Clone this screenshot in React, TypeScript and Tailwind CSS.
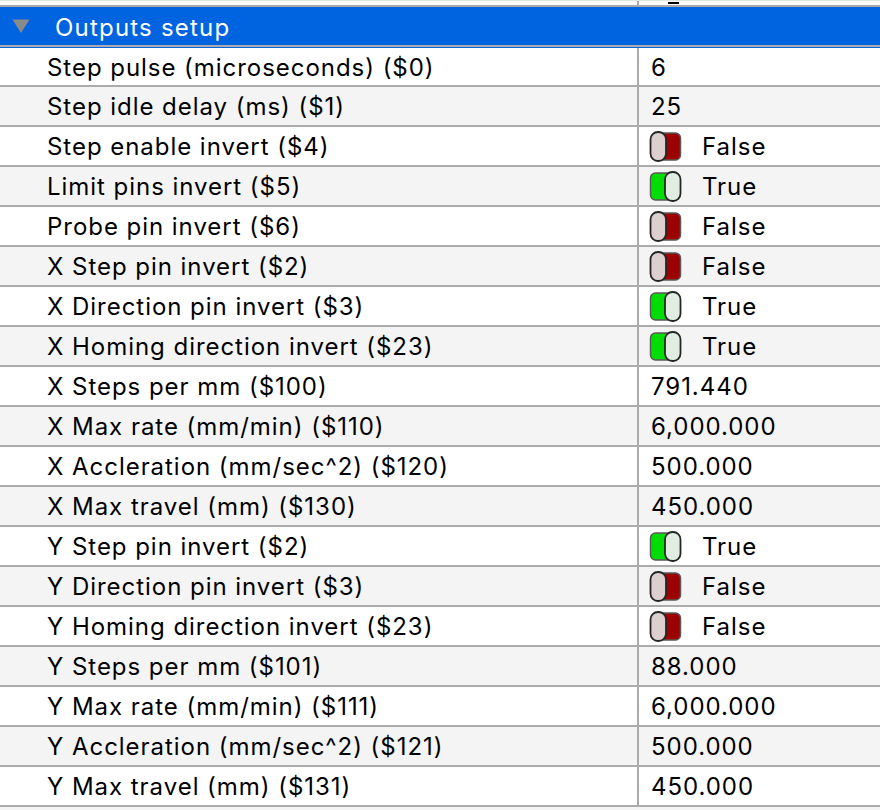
import React from "react";

const rows: [string, string][] = [
  ["Step pulse (microseconds) ($0)", "6"],
  ["Step idle delay (ms) ($1)", "25"],
  ["Step enable invert ($4)", "False"],
  ["Limit pins invert ($5)", "True"],
  ["Probe pin invert ($6)", "False"],
  ["X Step pin invert ($2)", "False"],
  ["X Direction pin invert ($3)", "True"],
  ["X Homing direction invert ($23)", "True"],
  ["X Steps per mm ($100)", "791.440"],
  ["X Max rate (mm/min) ($110)", "6,000.000"],
  ["X Accleration (mm/sec^2) ($120)", "500.000"],
  ["X Max travel (mm) ($130)", "450.000"],
  ["Y Step pin invert ($2)", "True"],
  ["Y Direction pin invert ($3)", "False"],
  ["Y Homing direction invert ($23)", "False"],
  ["Y Steps per mm ($101)", "88.000"],
  ["Y Max rate (mm/min) ($111)", "6,000.000"],
  ["Y Accleration (mm/sec^2) ($121)", "500.000"],
  ["Y Max travel (mm) ($131)", "450.000"],
];

function Toggle({ on }: { on: boolean }) {
  return (
    <svg width="33" height="31" viewBox="0 0 33 31" className="shrink-0">
      {on ? (
        <>
          <rect x="1.5" y="2" width="29" height="27" rx="5" fill="#00dd00" stroke="#5a5a5a" strokeWidth="1.5" />
          <rect x="16" y="1" width="15.5" height="29" rx="7.5" fill="#e3ece3" stroke="#262626" strokeWidth="1.8" />
        </>
      ) : (
        <>
          <rect x="2.5" y="2" width="29" height="27" rx="5" fill="#9c0000" stroke="#5a5a5a" strokeWidth="1.5" />
          <rect x="1.5" y="1" width="15.5" height="29" rx="7.5" fill="#dccfcf" stroke="#262626" strokeWidth="1.8" />
        </>
      )}
    </svg>
  );
}

export default function App() {
  return (
    <div className="w-[880px] h-[810px] overflow-hidden bg-[#f4f4f4] font-['Inter',sans-serif] text-[24px] tracking-[0.04em] text-black">
      <div className="flex h-[5px] border-t border-[#e4e4e4] bg-white">
        <div className="w-[637px]" />
        <div className="w-[2px] bg-[#ababab]" />
        <div className="pl-[29px] pt-[1px]">
          <div className="w-[11px] h-[2px] bg-black" />
        </div>
      </div>
      <div className="h-[2px] bg-[#ababab]" />
      <div className="h-[38px] bg-[#0064e1] flex items-center text-white">
        <svg className="ml-[12px] shrink-0" width="18" height="14" viewBox="0 0 18 14">
          <path d="M0.5 0.5H17.5L9 14Z" fill="#8a8a8a" />
        </svg>
        <span className="ml-[25px] pt-[4px] whitespace-nowrap tracking-[0.05em]">Outputs setup</span>
      </div>
      <div className="h-[2px] bg-[#ababab]" />
      {rows.map(([label, value], i) => {
        const isBool = value === "True" || value === "False";
        return (
          <div
            key={i}
            className={`flex h-[40px] border-b-2 border-[#ababab] ${
              i % 2 === 0 ? "bg-white" : "bg-[#f4f4f4]"
            } ${i === 0 ? "border-t border-t-[#0064e1]" : ""}`}
          >
            <div className="w-[639px] shrink-0 border-r-2 border-[#ababab] pl-[47px] pt-[2px] flex items-center whitespace-nowrap">
              {label}
            </div>
            {isBool ? (
              <div className="flex items-center pl-[10px] whitespace-nowrap">
                <Toggle on={value === "True"} />
                <span className="ml-[20px] pt-[2px]">{value}</span>
              </div>
            ) : (
              <div className="flex items-center pl-[12px] pt-[2px] whitespace-nowrap">{value}</div>
            )}
          </div>
        );
      })}
    </div>
  );
}
